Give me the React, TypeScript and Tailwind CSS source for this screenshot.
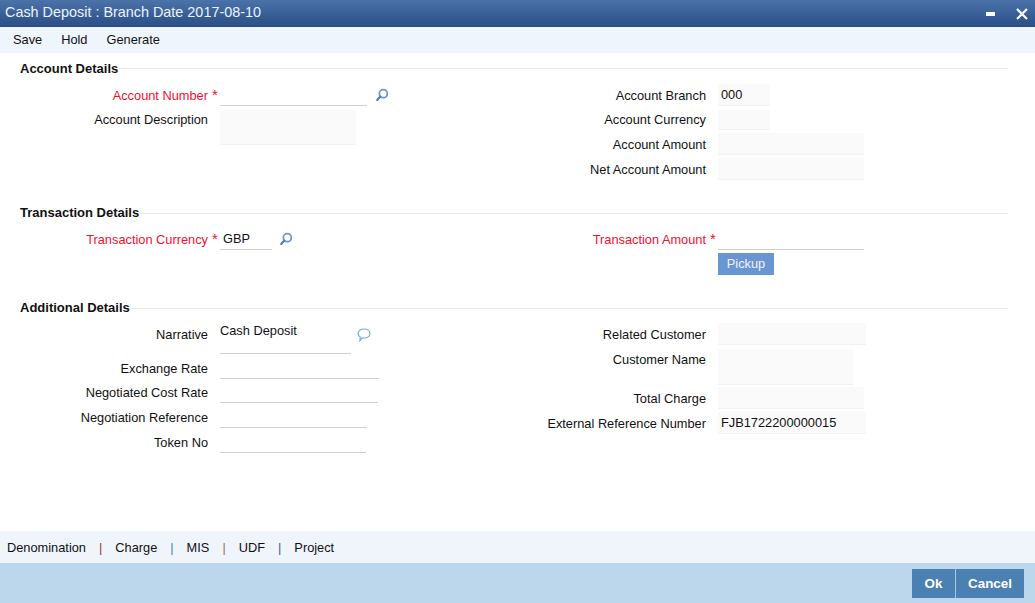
import type { ReactNode } from "react";

function SearchIcon() {
  return (
    <svg width="14" height="14" viewBox="0 0 14 14" fill="none" className="shrink-0">
      <circle cx="8.3" cy="5.7" r="4" stroke="#6f97d0" strokeWidth="1.8" />
      <path d="M5.4 8.6 L2.2 12" stroke="#4f7dbd" strokeWidth="2.2" strokeLinecap="round" />
    </svg>
  );
}

function BubbleIcon() {
  return (
    <svg width="14" height="14" viewBox="0 0 14 14" fill="none" className="shrink-0">
      <path
        d="M7 1 C10.3 1 13 2.9 13 5.5 C13 8.1 10.3 10 7 10 C6.4 10 5.8 9.9 5.2 9.8 L3 12.6 L3.2 9 C1.9 8.2 1 7 1 5.5 C1 2.9 3.7 1 7 1 Z"
        stroke="#7ea5d8"
        strokeWidth="1.2"
      />
    </svg>
  );
}

function Section({ title, ruleClass, children }: { title: string; ruleClass: string; children: ReactNode }) {
  return (
    <section>
      <div className="flex h-[16px] pl-[20px] pr-[27px]">
        <h2 className="text-[13px] leading-[18px] font-bold text-[#111]">{title}</h2>
        <div className={`flex-1 h-px bg-[#e6e6e6] ml-px ${ruleClass}`} />
      </div>
      <div className="flex mt-[8px]">{children}</div>
    </section>
  );
}

function Label({ text, required, tall, right }: { text: string; required?: boolean; tall?: boolean; right?: boolean }) {
  return (
    <div
      className={`${right ? "w-[188px] mr-[12px]" : "w-[208px] mr-[12px]"} relative shrink-0 pt-px -mb-px text-right ${
        tall ? "leading-[20px]" : "leading-[22px]"
      } ${required ? "text-[#f5102f]" : "text-[#111]"}`}
    >
      {text}
      {required && <span className="absolute left-full ml-[4px] top-0 text-[15px]">*</span>}
    </div>
  );
}

const filled = "bg-[#fafafa] border-b border-[#f2f2f2]";
const underlined = "border-b border-[#cfcfcf]";

export default function App() {
  return (
    <div className="w-[1035px] h-[603px] flex flex-col overflow-hidden bg-white text-[12.8px] font-['Liberation_Sans',Arial,sans-serif] text-[#111]">
      {/* title bar */}
      <header className="h-[27px] shrink-0 flex items-center justify-between bg-gradient-to-b from-[#4b73aa] to-[#2b4f88] border-b border-[#274a80] pl-[5px] pr-[7px]">
        <span className="text-[14.4px] text-[#eef3fa]">Cash Deposit : Branch Date 2017-08-10</span>
        <div className="flex items-center gap-[21px]">
          <span className="block w-[9px] h-[4px] bg-white mt-px" />
          <svg width="12" height="12" viewBox="0 0 12 12" className="mt-px">
            <path d="M1 1 L11 11 M11 1 L1 11" stroke="#fff" strokeWidth="2.2" />
          </svg>
        </div>
      </header>

      {/* toolbar */}
      <nav className="h-[26px] shrink-0 flex items-center gap-[19px] pl-[13px] pt-px bg-[#eff5fd] border-b border-[#eceff3]">
        <span>Save</span>
        <span>Hold</span>
        <span>Generate</span>
      </nav>

      <main className="flex-1 pt-[7px] flex flex-col gap-[24px]">
        <Section title="Account Details" ruleClass="mt-[8px]">
          <div className="w-[518px] shrink-0">
            <div className="flex">
              <Label text="Account Number" required />
              <div className={`w-[147px] h-[22px] ${underlined}`} />
              <span className="ml-[8px] mt-[4px]">
                <SearchIcon />
              </span>
            </div>
            <div className="flex mt-[3px]">
              <Label text="Account Description" tall />
              <div className={`w-[136px] h-[36px] ${filled}`} />
            </div>
          </div>
          <div>
            <div className="flex">
              <Label right text="Account Branch" />
              <div className={`w-[52px] h-[22px] pl-[3px] leading-[22px] ${filled}`}>000</div>
            </div>
            <div className="flex mt-[3px]">
              <Label right text="Account Currency" tall />
              <div className={`w-[52px] h-[20px] mt-px mb-px ${filled}`} />
            </div>
            <div className="flex mt-[2px]">
              <Label right text="Account Amount" />
              <div className={`w-[146px] h-[22px] ${filled}`} />
            </div>
            <div className="flex mt-[3px]">
              <Label right text="Net Account Amount" />
              <div className={`w-[146px] h-[22px] ${filled}`} />
            </div>
          </div>
        </Section>

        <Section title="Transaction Details" ruleClass="mt-[9px]">
          <div className="w-[518px] shrink-0 flex">
            <Label text="Transaction Currency" required />
            <div className={`w-[52px] h-[22px] pl-[3px] leading-[22px] ${underlined}`}>GBP</div>
            <span className="ml-[7px] mt-[4px]">
              <SearchIcon />
            </span>
          </div>
          <div>
            <div className="flex">
              <Label right text="Transaction Amount" required />
              <div className={`w-[146px] h-[22px] ${underlined}`} />
            </div>
            <div className="flex mt-[3px]">
              <div className="w-[200px]" />
              <button className="w-[56px] h-[22px] bg-[#6a95d3] text-[#eef3fa] text-center">Pickup</button>
            </div>
          </div>
        </Section>

        <Section title="Additional Details" ruleClass="mt-[9px]">
          <div className="w-[518px] shrink-0">
            <div className="flex">
              <Label text="Narrative" />
              <div className={`w-[131px] h-[31px] leading-[16px] ${underlined}`}>Cash Deposit</div>
              <span className="ml-[6px] mt-[5px]">
                <BubbleIcon />
              </span>
            </div>
            <div className="flex mt-[3px]">
              <Label text="Exchange Rate" />
              <div className={`w-[159px] h-[22px] ${underlined}`} />
            </div>
            <div className="flex mt-[2px]">
              <Label text="Negotiated Cost Rate" />
              <div className={`w-[158px] h-[22px] ${underlined}`} />
            </div>
            <div className="flex mt-[3px]">
              <Label text="Negotiation Reference" />
              <div className={`w-[147px] h-[22px] ${underlined}`} />
            </div>
            <div className="flex mt-[3px]">
              <Label text="Token No" />
              <div className={`w-[146px] h-[22px] ${underlined}`} />
            </div>
          </div>
          <div>
            <div className="flex">
              <Label right text="Related Customer" />
              <div className={`w-[148px] h-[22px] ${filled}`} />
            </div>
            <div className="flex mt-[4px]">
              <Label right text="Customer Name" tall />
              <div className={`w-[135px] h-[36px] ${filled}`} />
            </div>
            <div className="flex mt-[2px]">
              <Label right text="Total Charge" />
              <div className={`w-[146px] h-[22px] ${filled}`} />
            </div>
            <div className="flex mt-[3px]">
              <Label right text="External Reference Number" />
              <div className={`w-[148px] h-[22px] pl-[3px] leading-[22px] ${filled}`}>FJB1722200000015</div>
            </div>
          </div>
        </Section>
      </main>

      {/* sub screens */}
      <div className="h-[32px] shrink-0 flex items-center pl-[7px] pt-px bg-[#f0f5fc]">
        <span>Denomination</span>
        <span className="mx-[13px] text-[#9c3a30]">|</span>
        <span>Charge</span>
        <span className="mx-[13px] text-[#3f7fb5]">|</span>
        <span>MIS</span>
        <span className="mx-[13px] text-[#a8703c]">|</span>
        <span>UDF</span>
        <span className="mx-[13px] text-[#4a5f7a]">|</span>
        <span>Project</span>
      </div>

      {/* footer */}
      <footer className="h-[40px] shrink-0 flex justify-end pt-[6px] pr-[11px] bg-[#bcd7ec]">
        <div className="flex h-[29px] bg-[#4a80b2] text-white font-bold text-[13.4px] leading-[29px]">
          <button className="w-[44px] text-center border-r border-[#a9c8e0]">Ok</button>
          <button className="w-[68px] text-center">Cancel</button>
        </div>
      </footer>
    </div>
  );
}
